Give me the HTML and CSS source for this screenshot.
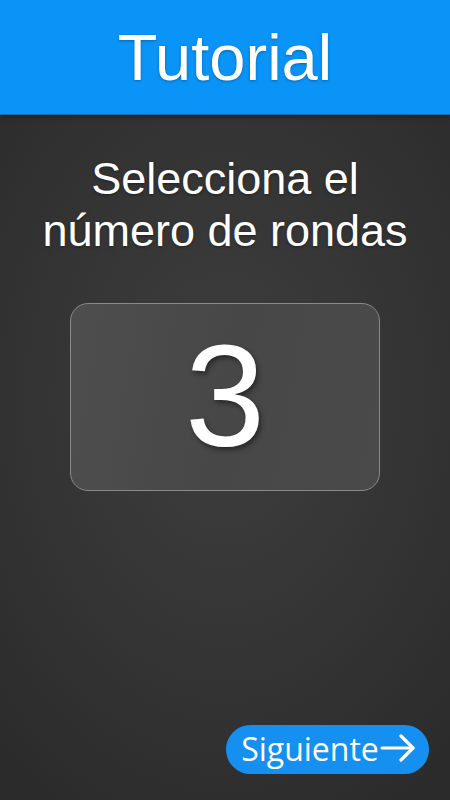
FILE: index.html
```html
<!DOCTYPE html>
<html lang="es">
  <head>
    <meta charset="UTF-8" />
    <meta name="viewport" content="width=device-width, initial-scale=1.0" />
    <title>Tutorial</title>
    <link rel="stylesheet" href="styles.css">
  </head>

  <body>
    <header>
      <h1>Tutorial</h1>
    </header>

    <main class="tutorial">
      <h2>Selecciona el<br />número de rondas</h2>

      <!-- Round selector -->
      <div class="round-card">
        <span class="round-number">3</span>
      </div>
    </main>

    <footer>
      <button class="next-btn">
        <span>Siguiente</span>
        <svg width="37" height="28" viewBox="0 0 37 28" fill="none" stroke="white" stroke-width="3.2" stroke-linecap="round" stroke-linejoin="round">
          <path d="M3 14 H34" />
          <path d="M22 2 L34 14 L22 26" />
        </svg>
      </button>
    </footer>
  </body>
</html>
```

FILE: styles.css
```css
/* General Styles */

html,
body {
  height: 100%;
}

body {
  font-family: "Liberation Sans", Arial, sans-serif;
  margin: 0;
  padding: 0;
  color: white;
  display: flex;
  flex-direction: column;
  background: radial-gradient(ellipse 75% 60% at 50% 50%, #3e3e3e 0%, #343434 55%, #2b2b2b 100%);
}
/* Header */

header {
  background-color: #0a94f8;
  border-bottom: 1px solid #1a6aa8;
  box-shadow: 0 2px 4px rgba(0, 0, 0, 0.35);
  height: 114px;
  display: flex;
  align-items: center;
  justify-content: center;
}

header h1 {
  margin: 0;
  font-size: 65px;
  font-weight: normal;
  text-shadow: 0 1px 3px rgba(0, 0, 0, 0.3);
}
/* Content */

.tutorial {
  flex: 1;
  display: flex;
  flex-direction: column;
  align-items: center;
}

.tutorial h2 {
  margin: 38px 0 0;
  font-size: 45px;
  font-weight: normal;
  line-height: 52px;
  text-align: center;
  text-shadow: 0 1px 3px rgba(0, 0, 0, 0.4);
}

.round-card {
  margin-top: 46px;
  width: 308px;
  height: 186px;
  border: 1px solid #8a8a8a;
  border-radius: 18px;
  background: linear-gradient(100deg, #4e4e4e 0%, #474747 50%, #4a4a4a 100%);
  display: flex;
  align-items: center;
  justify-content: center;
}

.round-number {
  font-size: 144px;
  line-height: 1;
  text-shadow: 2px 3px 5px rgba(0, 0, 0, 0.45);
}
/* Footer */

footer {
  display: flex;
  justify-content: flex-end;
  padding: 0 21px 26px 0;
}

.next-btn {
  width: 203px;
  height: 49px;
  border: none;
  border-radius: 25px;
  background-color: #1690f0;
  color: white;
  font-family: "Open Sans", sans-serif;
  font-size: 32px;
  display: flex;
  align-items: center;
  justify-content: center;
  gap: 0;
  padding: 0 0 3px 2px;
  cursor: pointer;
}
```
